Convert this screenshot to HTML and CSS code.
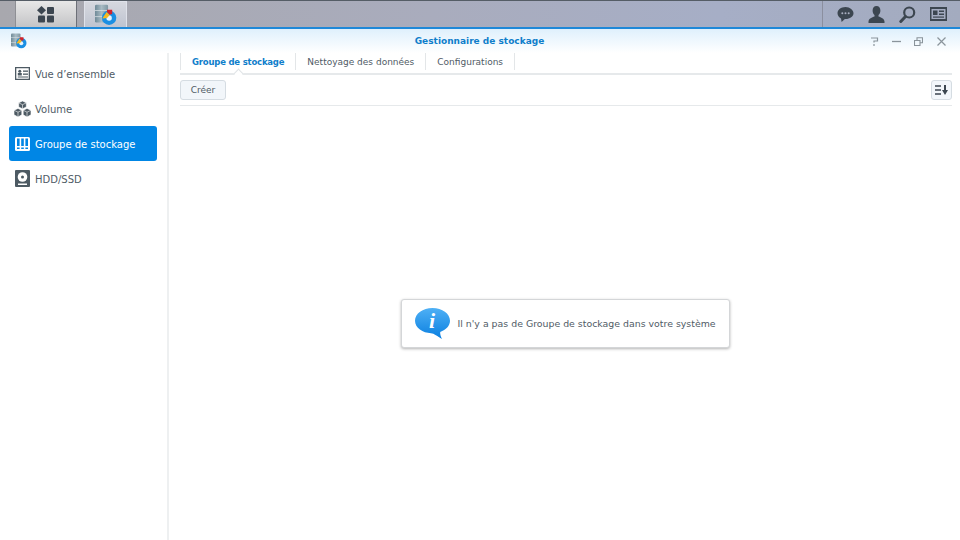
FILE: index.html
```html
<!DOCTYPE html>
<html lang="fr">
<head>
  <meta charset="UTF-8" />
  <meta name="viewport" content="width=device-width, initial-scale=1" />
  <title>Gestionnaire de stockage</title>
  <link rel="stylesheet" href="styles.css">
</head>
<body>

<svg class="defs" width="0" height="0">
  <defs>
    <linearGradient id="driveGrad" x1="0" y1="0" x2="1" y2="0">
      <stop offset="0" stop-color="#6f8a98"/>
      <stop offset="0.5" stop-color="#a9bbc4"/>
      <stop offset="1" stop-color="#7f97a3"/>
    </linearGradient>
  </defs>
  <symbol id="appIcon" viewBox="0 0 32 32">
    <rect x="0" y="1" width="19" height="26" rx="2" fill="url(#driveGrad)"/>
    <rect x="0" y="9" width="19" height="1" fill="#dfe6e9"/>
    <rect x="0" y="18" width="19" height="1" fill="#dfe6e9"/>
    <circle cx="20.500" cy="20" r="10.500" fill="#1a8fe3"/>
    <circle cx="20.500" cy="20.500" r="4" fill="#e8f3fb"/>
    <path d="M10.500 21 L17 11.500 L21.500 16 L17.500 20.500 Z" fill="#f5b921"/>
    <path d="M17.500 8.500 H25 V14.500 L21.500 15.500 L17.500 11.500 Z" fill="#d2232a"/>
  </symbol>
  <symbol id="cardIcon" viewBox="0 0 15 13">
    <path fill-rule="evenodd" d="M0 0h15v13H0z M1.300 1.300v10.400h12.400V1.300z" fill="#4d5a63"/>
    <circle cx="4.800" cy="4.300" r="1.500" fill="#4d5a63"/>
    <rect x="2.800" y="6" width="4" height="2.500" fill="#4d5a63"/>
    <rect x="8" y="3.500" width="5" height="1.300" fill="#4d5a63"/>
    <rect x="8" y="6.500" width="5" height="1.300" fill="#4d5a63"/>
    <rect x="2.800" y="9.500" width="10.200" height="1" fill="#4d5a63"/>
  </symbol>
</svg>

<header class="taskbar">
  <button class="task-btn main-btn" aria-label="Menu principal">
    <svg width="18" height="17" viewBox="0 0 18 17">
      <path d="M4.500 0 L9 4.200 L4.500 8.400 L0 4.200 Z" fill="#3c4650"/>
      <rect x="10" y="1" width="7" height="7" rx="1" fill="#3c4650"/>
      <rect x="1" y="9.500" width="7" height="7" rx="1" fill="#3c4650"/>
      <rect x="10" y="9.500" width="7" height="7" rx="1" fill="#3c4650"/>
    </svg>
  </button>
  <button class="task-btn app-btn" aria-label="Gestionnaire de stockage">
    <svg width="22" height="22"><use href="#appIcon"/></svg>
  </button>
  <div class="tray">
    <svg width="17" height="17" viewBox="0 0 17 17">
      <path d="M8.500 1C4 1 .5 3.800.5 7.300c0 2.200 1.400 4.100 3.500 5.200L4.600 16l3.300-2.900h.6c4.500 0 8-2.600 8-5.800S13 1 8.500 1z" fill="#3c4650"/>
      <circle cx="5.300" cy="7.300" r="1" fill="#a9afc0"/><circle cx="8.500" cy="7.300" r="1" fill="#a9afc0"/><circle cx="11.700" cy="7.300" r="1" fill="#a9afc0"/>
    </svg>
    <svg width="17" height="17" viewBox="0 0 17 17">
      <path d="M8.500 0C6 0 4.600 2 4.600 4.500c0 2 .8 3.600 1.900 4.600v1.400C4 11.400.8 12.300.5 15.500V17h16v-1.500c-.3-3.200-3.500-4.100-6-5V9.100c1.100-1 1.900-2.600 1.900-4.600C12.400 2 11 0 8.500 0z" fill="#3c4650"/>
    </svg>
    <svg width="17" height="17" viewBox="0 0 17 17">
      <circle cx="10.200" cy="6.500" r="5" fill="none" stroke="#3c4650" stroke-width="2.200"/>
      <path d="M6.500 10.500 L1.800 15.500" stroke="#3c4650" stroke-width="3" stroke-linecap="round"/>
    </svg>
    <svg width="17" height="14" viewBox="0 0 17 14">
      <path fill-rule="evenodd" d="M0 0h17v14H0z M1.500 2v10h14V2z" fill="#3c4650"/>
      <rect x="3" y="3.500" width="4.500" height="4.500" fill="#3c4650"/>
      <rect x="9" y="3.500" width="5" height="1.500" fill="#3c4650"/>
      <rect x="9" y="6.500" width="5" height="1.500" fill="#3c4650"/>
      <rect x="3" y="9.500" width="11" height="1.200" fill="#3c4650"/>
    </svg>
  </div>
</header>

<div class="window">
  <div class="win-header">
    <svg class="win-logo" width="16" height="16"><use href="#appIcon"/></svg>
    <div class="win-title">Gestionnaire de stockage</div>
    <div class="win-controls">
      <svg width="9" height="9" viewBox="0 0 9 9"><path d="M1 1h6.500v3H4v1.500M4 7v2" fill="none" stroke="#8a949b" stroke-width="1.200"/></svg>
      <svg width="9" height="9" viewBox="0 0 9 9"><path d="M0 4.500h9" stroke="#8a949b" stroke-width="1.300"/></svg>
      <svg width="9" height="9" viewBox="0 0 9 9"><path d="M.5 3.500h5.500v5H.5z M3 3V.7h5.500v5H6.300" fill="none" stroke="#8a949b" stroke-width="1.100"/></svg>
      <svg class="win-close" width="9" height="9" viewBox="0 0 9 9"><path d="M.5.500l8 8M8.500.500l-8 8" stroke="#8a949b" stroke-width="1.200"/></svg>
    </div>
  </div>

  <div class="win-body">
    <nav class="sidebar">
      <a class="side-item">
        <svg width="15" height="13"><use href="#cardIcon"/></svg>
        <span>Vue d’ensemble</span>
      </a>
      <a class="side-item">
        <svg class="volume-icon" width="17" height="16" viewBox="0 0 17 16">
          <g fill="#4d5a63" stroke="#fff" stroke-width="0.600">
            <path d="M8.500 0l3.800 1.800v4.200L8.500 7.800 4.700 6V1.800z"/>
            <path d="M4 7.400l3.800 1.800v4.600L4 16 0 13.800V9.200z"/>
            <path d="M13 7.400l4 1.800v4.600L13 16l-3.800-2.200V9.200z"/>
          </g>
          <path d="M4.700 1.800l3.800 1.900 3.800-1.900M8.500 3.700v4M0 9.200l4 2 3.800-2M4 11.200V16M9.200 9.200l3.800 2 4-2M13 11.200V16" fill="none" stroke="#fff" stroke-width="0.600"/>
        </svg>
        <span>Volume</span>
      </a>
      <a class="side-item active">
        <svg width="15" height="14" viewBox="0 0 15 14">
          <rect width="15" height="14" rx="1.500" fill="#fff"/>
          <rect x="2" y="1.500" width="2.600" height="7.500" fill="#0086e5"/>
          <rect x="6.200" y="1.500" width="2.600" height="7.500" fill="#0086e5"/>
          <rect x="10.400" y="1.500" width="2.600" height="7.500" fill="#0086e5"/>
          <rect x="2" y="10.500" width="2.600" height="1.500" fill="#0086e5"/>
          <rect x="6.200" y="10.500" width="2.600" height="1.500" fill="#0086e5"/>
          <rect x="10.400" y="10.500" width="2.600" height="1.500" fill="#0086e5"/>
        </svg>
        <span>Groupe de stockage</span>
      </a>
      <a class="side-item">
        <svg width="15" height="17" viewBox="0 0 15 17">
          <rect width="15" height="17" rx="1" fill="#4d5a63"/>
          <circle cx="7.500" cy="7" r="4.800" fill="#fff"/>
          <circle cx="7.500" cy="7" r="1.500" fill="#4d5a63"/>
          <rect x="3" y="13.500" width="9" height="1.500" fill="#fff"/>
        </svg>
        <span>HDD/SSD</span>
      </a>
    </nav>

    <main class="content">
      <div class="tabs">
        <a class="tab active">Groupe de stockage</a>
        <a class="tab">Nettoyage des données</a>
        <a class="tab">Configurations</a>
      </div>
      <div class="toolbar">
        <button class="btn">Créer</button>
        <button class="btn sort-btn" aria-label="Trier">
          <svg width="13" height="10" viewBox="0 0 13 10">
            <path d="M0 1h6M0 5h6M0 9h6" stroke="#3c4650" stroke-width="1.500"/>
            <path d="M9 0h2v5h2l-3 5-3-5h2z" fill="#3c4650"/>
          </svg>
        </button>
      </div>
      <div class="empty">
        <div class="notice">
          <svg width="35" height="31" viewBox="0 0 35 31">
            <defs>
              <linearGradient id="bubble" x1="0" y1="0" x2="0" y2="1">
                <stop offset="0" stop-color="#4eb0f5"/>
                <stop offset="1" stop-color="#0a7fe0"/>
              </linearGradient>
            </defs>
            <path d="M17.500 0C7.800 0 0 5.500 0 12.800 0 20 7.800 25 16 25.200c3 .1 6.500 3 11 5.800-1.200-2-2-5-1.800-7C31 21.800 35 17.800 35 12.800 35 5.500 27.200 0 17.500 0z" fill="url(#bubble)"/>
            <text x="17" y="20" class="notice-i">i</text>
          </svg>
          <span>Il n'y a pas de Groupe de stockage dans votre système</span>
        </div>
      </div>
    </main>
  </div>
</div>

</body>
</html>
```

FILE: styles.css
```css
* {
  box-sizing: border-box;
}
html, body {
  margin: 0;
  padding: 0;
  height: 100%;
  overflow: hidden;
  font-family: 'DejaVu Sans', Verdana, sans-serif;
  font-size: 10px;
  background: #fff;
}
.defs {
  position: absolute;
}

.taskbar {
  height: 27px;
  display: flex;
  padding-left: 15px;
  gap: 7px;
  background: linear-gradient(90deg, #a8a8ae 0%, #a9acbd 45%, #a6aec6 75%, #a3abbf 100%);
  border-top: 1px solid #555d66;
}
.task-btn {
  border: none;
  padding: 0;
  display: flex;
  align-items: center;
  justify-content: center;
  height: 26px;
}
.main-btn {
  width: 62px;
  background: linear-gradient(#e8e8e8, #c4c4c6);
  border-left: 1px solid #8e8f94;
  border-right: 1px solid #6d7078;
}
.app-btn {
  width: 43px;
  background: linear-gradient(#d6d8df, #bfc4d0);
  border: 1px solid #dfe2ea;
  border-bottom: none;
}
.tray {
  margin-left: auto;
  height: 26px;
  display: flex;
  align-items: center;
  gap: 14px;
  padding: 0 13px 0 14px;
  border-left: 1px solid #8b8f9f;
}

.window {
  height: 513px;
  display: flex;
  flex-direction: column;
  border-top: 2px solid #1e88d8;
}
.win-header {
  height: 24px;
  flex: none;
  display: grid;
  grid-template-columns: 1fr auto 1fr;
  align-items: center;
  padding: 0 14px 0 13px;
  background: linear-gradient(#dff0fc, #fff);
}
.win-logo {
  margin-left: -2px;
}
.win-title {
  text-align: center;
  font-size: 9px;
  font-weight: bold;
  color: #0f7ecb;
}
.win-controls {
  display: flex;
  justify-content: flex-end;
  gap: 13px;
}
.win-close {
  margin-left: 1px;
}

.win-body {
  flex: 1;
  display: flex;
  min-height: 0;
}
.sidebar {
  width: 169px;
  flex: none;
  padding: 3px 10px 0 9px;
  border-right: 2px solid #eef0f1;
  display: flex;
  flex-direction: column;
}
.side-item {
  height: 35px;
  display: flex;
  align-items: center;
  gap: 5px;
  padding-left: 6px;
  border-radius: 3px;
  color: #4f5b66;
}
.side-item span {
  padding-top: 1px;
}
.side-item.active {
  background: #0086e5;
  color: #fff;
}
.volume-icon {
  margin: 0 -1px 0 -1px;
}

.content {
  flex: 1;
  display: flex;
  flex-direction: column;
  padding: 0 8px 0 11px;
  min-width: 0;
}
.tabs {
  height: 22px;
  flex: none;
  display: flex;
  align-items: flex-start;
  border-bottom: 2px solid #e6e9eb;
}
.tab {
  height: 17px;
  display: flex;
  align-items: center;
  padding: 0 11px;
  font-size: 9px;
  color: #505b66;
  border-right: 1px solid #e3e6e8;
  white-space: nowrap;
}
.tab.active {
  color: #0f7ecb;
  font-weight: bold;
  font-size: 8.5px;
  letter-spacing: -0.2px;
  border-left: 1px solid #e3e6e8;
  position: relative;
}
.tab.active::after {
  content: '';
  position: absolute;
  left: 50%;
  top: 17px;
  width: 6px;
  height: 6px;
  margin-left: -3px;
  background: #fff;
  border-right: 1px solid #dfe3e6;
  border-bottom: 1px solid #dfe3e6;
  transform: rotate(225deg);
}
.toolbar {
  height: 31px;
  flex: none;
  display: flex;
  align-items: center;
  justify-content: space-between;
  border-bottom: 1px solid #e6e9eb;
}
.btn {
  width: 46px;
  height: 20px;
  padding: 0;
  font-family: inherit;
  font-size: 9px;
  color: #505b66;
  background: #f2f6fa;
  border: 1px solid #d5dce2;
  border-radius: 3px;
}
.sort-btn {
  width: 21px;
  display: flex;
  align-items: center;
  justify-content: center;
}

.empty {
  flex: 1;
  display: flex;
  align-items: center;
  justify-content: center;
  padding-right: 2px;
}
.notice {
  width: 329px;
  height: 49px;
  display: flex;
  align-items: center;
  gap: 8px;
  padding-left: 13px;
  background: #fff;
  border: 1px solid #d4d6d8;
  border-radius: 3px;
  box-shadow: 0 1px 3px rgba(0, 0, 0, 0.3);
  font-size: 9.4px;
  color: #505b66;
  white-space: nowrap;
}
.notice svg {
  flex: none;
}
.notice-i {
  font-family: 'Liberation Serif', serif;
  font-style: italic;
  font-weight: bold;
  font-size: 22px;
  fill: #fff;
  text-anchor: middle;
}
```
